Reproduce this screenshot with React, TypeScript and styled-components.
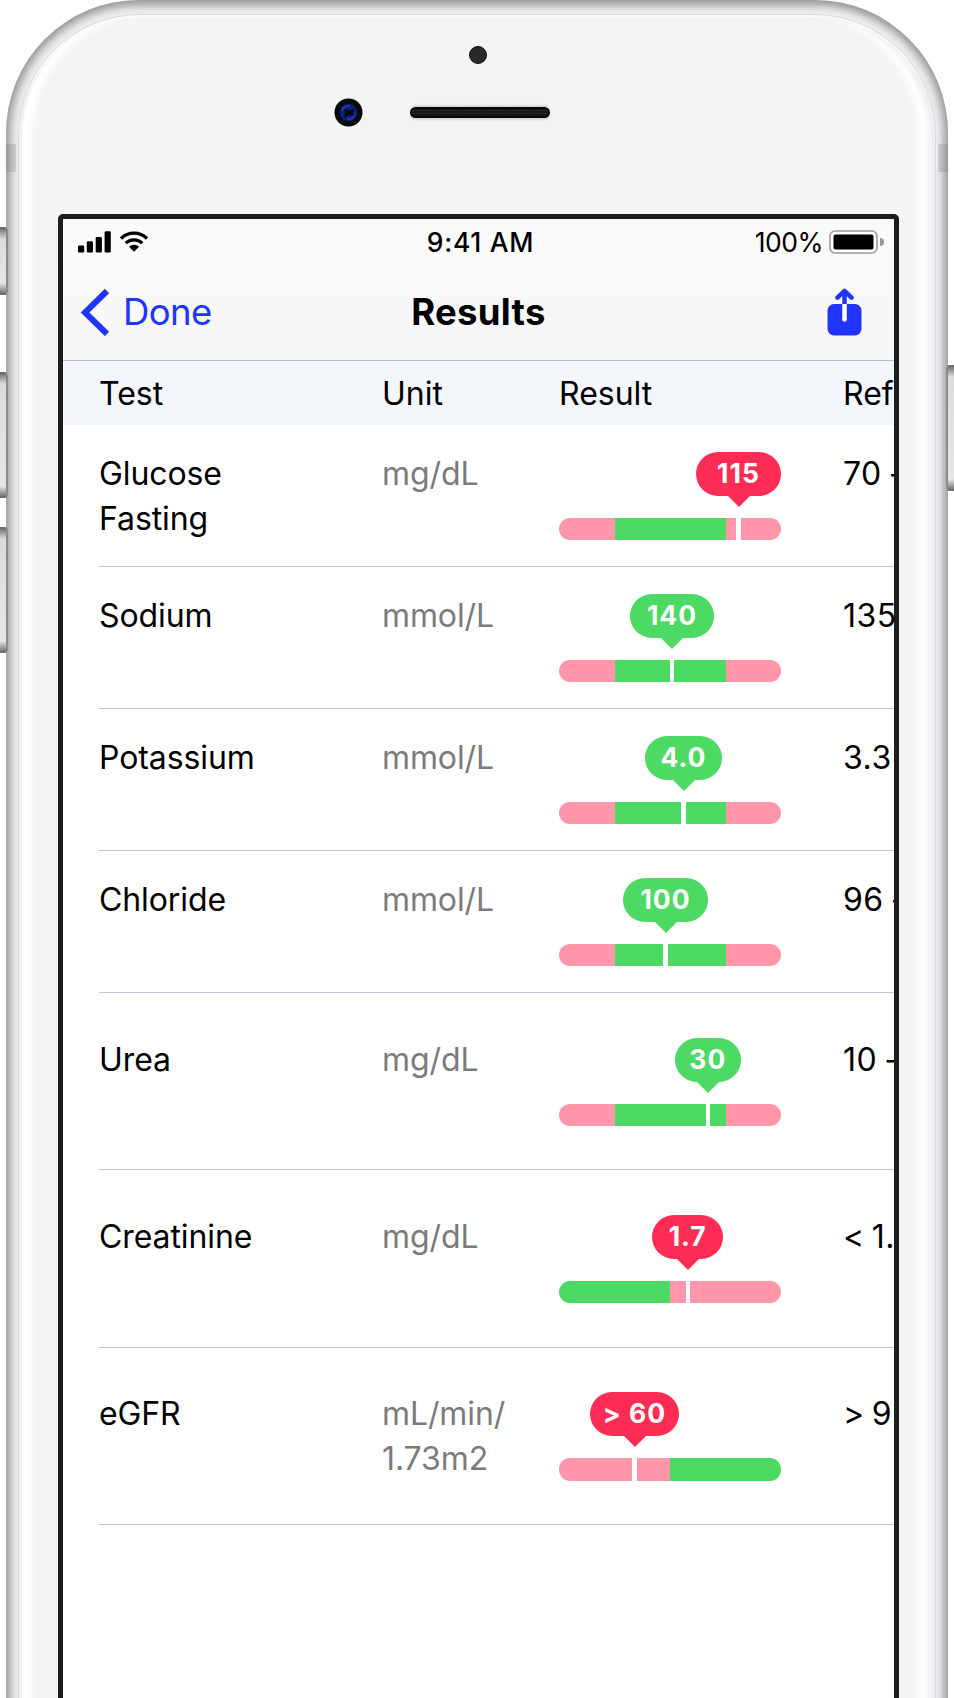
import React from "react";
import styled, { createGlobalStyle } from "styled-components";

const GlobalStyle = createGlobalStyle`
  *, *::before, *::after { box-sizing: border-box; }
  html, body { margin: 0; padding: 0; background: #fff; }
  body { font-family: Inter, "Liberation Sans", sans-serif; color: #000; }
`;

const Stage = styled.main`
  position: relative;
  width: 954px;
  height: 1698px;
  padding: 0 6px;
  overflow: hidden;
  background: #fff;
`;

const SideButton = styled.span<{ $side: "left" | "right"; $top: number; $height: number }>`
  position: absolute;
  z-index: 1;
  top: ${(p) => p.$top}px;
  ${(p) => p.$side}: -6px;
  width: 14px;
  height: ${(p) => p.$height}px;
  border: 2px solid #8b8b8b;
  border-top-color: #6d6d6d;
  border-bottom-color: #6d6d6d;
  border-radius: 4px;
  background: linear-gradient(#777, #dcdcdc 10px, #e6e6e6 calc(100% - 10px), #777);
`;

const Body = styled.div`
  position: relative;
  height: 1720px;
  padding: 14px 12px 0;
  border-radius: 133px 133px 0 0;
  background: #f0f0f1;
  box-shadow: inset 0 1px 10px 4px #8f9193;
`;

const Antenna = styled.span<{ $side: "left" | "right" }>`
  position: absolute;
  top: 144px;
  ${(p) => p.$side}: 0;
  width: 10px;
  height: 28px;
  background: rgba(110, 110, 112, 0.22);
`;

const Face = styled.div`
  height: 100%;
  padding: 199px 36px 0 39px;
  border: 1px solid #d9dadd;
  border-radius: 122px 122px 0 0;
  background: #f3f4f6;
  box-shadow: inset 0 2px 1px #fbfbfc, inset 3px 0 2px #eeeff1, inset -6px 0 4px #eeeff2,
    inset 16px 0 7px -3px #fff, inset -20px 0 5px -3px #fdfdfd;
`;

const Hardware = styled.div`
  position: absolute;
  inset: 0 0 auto 0;
  height: 140px;
`;

const Sensor = styled.span`
  position: absolute;
  left: 463px;
  top: 46px;
  width: 18px;
  height: 18px;
  border: 1.5px solid #111;
  border-radius: 50%;
  background: #292929;
`;

const Lens = styled.svg`
  position: absolute;
  left: 328px;
  top: 98px;
`;

const Speaker = styled.span`
  position: absolute;
  left: 404px;
  top: 107px;
  width: 140px;
  height: 11px;
  border: 2px solid #070707;
  border-radius: 6px;
  background: radial-gradient(circle, #3b3b3b 0.7px, #161616 1px) 0 0 / 3px 3px;
  box-shadow: 0 -2px 2px #d9dadb, 0 2px 2px #d5d6d8;
`;

const Screen = styled.section`
  height: 1510px;
  border: 5px solid #1d1d1d;
  border-radius: 5px;
  background: #fff;
  overflow: hidden;
`;

const TopBar = styled.header`
  height: 142px;
  border-bottom: 1px solid #b7bccb;
  background: linear-gradient(#fafafa, #f7f7f7);
`;

const StatusBar = styled.div`
  display: grid;
  grid-template-columns: 1fr auto 1fr;
  align-items: center;
  height: 46px;
  padding: 0 9px 0 15px;
  font-size: 26.5px;
  line-height: 46px;
`;

const Signals = styled.div`
  display: flex;
  align-items: center;
  gap: 8px;
`;

const Clock = styled.time`
  margin-left: -2px;
  font-weight: 500;
  letter-spacing: 0.7px;
`;

const Battery = styled.div`
  display: flex;
  align-items: center;
  justify-content: flex-end;
  gap: 6px;
  letter-spacing: -0.5px;
`;

const NavBar = styled.nav`
  display: grid;
  grid-template-columns: 1fr auto 1fr;
  align-items: center;
  height: 94px;
  padding: 0 17px;
`;

const Back = styled.button`
  display: flex;
  align-items: center;
  gap: 13px;
  padding: 0;
  border: 0;
  background: none;
  color: #2134ff;
  font: 400 36.5px/44px Inter, sans-serif;
  letter-spacing: -0.6px;
`;

const Title = styled.h1`
  margin: 0;
  font-size: 36.5px;
  font-weight: 650;
  line-height: 44px;
  letter-spacing: 0.3px;
`;

const Share = styled.button`
  justify-self: end;
  display: flex;
  margin-right: 15px;
  padding: 0;
  border: 0;
  background: none;
`;

const columns = "283px 177px 284px 200px";

const HeaderRow = styled.div`
  display: grid;
  grid-template-columns: ${columns};
  height: 64px;
  padding-left: 36px;
  background: #f3f6fb;
  font-size: 32px;
  line-height: 66px;
  letter-spacing: 0;
  white-space: nowrap;
`;

const Row = styled.div<{ $tall?: boolean }>`
  display: grid;
  grid-template-columns: ${columns};
  height: ${(p) => (p.$tall ? 177.3 : 142)}px;
  margin-left: 36px;
  padding-top: ${(p) => (p.$tall ? 44.5 : 27)}px;
  border-bottom: 1px solid #c3c4da;
  font-size: 32px;
  line-height: 44.8px;
  letter-spacing: -0.1px;
`;

const Name = styled.div`
  width: 180px;
`;

const Unit = styled.div`
  white-space: pre-line;
  color: #7b7b7b;
`;

const Reference = styled.div`
  letter-spacing: 0.5px;
  word-spacing: -2.5px;
  white-space: nowrap;
`;

const Gauge = styled.div`
  width: 222px;
`;

const Bubble = styled.div<{ $at: number; $width: number; $color: string }>`
  position: relative;
  width: ${(p) => p.$width}px;
  height: 44px;
  margin-left: ${(p) => p.$at - p.$width / 2}px;
  border-radius: 22px;
  background: ${(p) => p.$color};
  color: #fff;
  font-size: 26.5px;
  font-weight: 650;
  line-height: 43px;
  letter-spacing: 1px;
  text-align: center;
  white-space: nowrap;

  &::after {
    content: "";
    position: absolute;
    left: calc(50% - 11px);
    top: 44px;
    border: 11px solid transparent;
    border-top-color: ${(p) => p.$color};
    border-bottom: 0;
  }
`;

const Track = styled.div<{ $bands: string }>`
  position: relative;
  display: grid;
  grid-template-columns: ${(p) => p.$bands};
  height: 22.3px;
  margin-top: 22.2px;
  border-radius: 11.2px;
  overflow: hidden;
`;

const Band = styled.span<{ $good: boolean }>`
  background: ${(p) => (p.$good ? "#4cd964" : "#ff96aa")};
`;

const Marker = styled.span<{ $at: number }>`
  position: absolute;
  left: ${(p) => p.$at - 2.2}px;
  top: 0;
  width: 4.4px;
  height: 100%;
  background: #fff;
`;

type Result = {
  name: string;
  unit: string;
  value: string;
  at: number;
  width: number;
  alert?: boolean;
  bands: "middle" | "low" | "high";
  reference: string;
  tall?: boolean;
};

const results: Result[] = [
  { name: "Glucose Fasting", unit: "mg/dL", value: "115", at: 179.5, width: 84.5, alert: true, bands: "middle", reference: "70 -" },
  { name: "Sodium", unit: "mmol/L", value: "140", at: 113, width: 84.5, bands: "middle", reference: "135" },
  { name: "Potassium", unit: "mmol/L", value: "4.0", at: 124.5, width: 77.5, bands: "middle", reference: "3.3" },
  { name: "Chloride", unit: "mmol/L", value: "100", at: 106.5, width: 84.5, bands: "middle", reference: "96 -" },
  { name: "Urea", unit: "mg/dL", value: "30", at: 148.8, width: 66.5, bands: "middle", reference: "10 -", tall: true },
  { name: "Creatinine", unit: "mg/dL", value: "1.7", at: 128.7, width: 71, alert: true, bands: "low", reference: "< 1.", tall: true },
  { name: "eGFR", unit: "mL/min/\n1.73m2", value: "> 60", at: 75.5, width: 89, alert: true, bands: "high", reference: "> 9", tall: true },
];

const bandSets = {
  middle: { template: "1fr 2fr 1fr", good: [false, true, false] },
  low: { template: "1fr 1fr", good: [true, false] },
  high: { template: "1fr 1fr", good: [false, true] },
};

function ResultGauge({ result }: { result: Result }) {
  const set = bandSets[result.bands];
  return (
    <Gauge>
      <Bubble $at={result.at} $width={result.width} $color={result.alert ? "#ff2d55" : "#4cd964"}>
        {result.value}
      </Bubble>
      <Track $bands={set.template}>
        {set.good.map((good, i) => (
          <Band key={i} $good={good} />
        ))}
        <Marker $at={result.at} />
      </Track>
    </Gauge>
  );
}

export default function App() {
  return (
    <>
      <GlobalStyle />
      <Stage>
        <SideButton $side="left" $top={227} $height={68} />
        <SideButton $side="left" $top={372} $height={126} />
        <SideButton $side="left" $top={527} $height={126} />
        <SideButton $side="right" $top={365} $height={126} />
        <Body>
          <Antenna $side="left" />
          <Antenna $side="right" />
          <Hardware>
            <Sensor />
            <Lens width="29" height="29" viewBox="0 0 29 29">
              <circle cx="14.5" cy="14.5" r="14" fill="#0a0a0b" />
              <circle cx="14.5" cy="14.5" r="8.7" fill="#0b1f78" />
              <path d="M8 13a7 7 0 0 1 8-5M21 16a7 7 0 0 1-8 5" fill="none" stroke="#1539c0" strokeWidth="2" />
              <path d="M10 11l5 1 5-1-1 4 1 3-5-1-5 3 1-5z" fill="#05070f" />
            </Lens>
            <Speaker />
          </Hardware>
          <Face>
            <Screen>
              <TopBar>
                <StatusBar>
                  <Signals>
                    <svg width="33" height="22" viewBox="0 0 33 22">
                      <rect x="0" y="14.5" width="6.2" height="7" rx="1.3" />
                      <rect x="8.8" y="10.3" width="6.2" height="11.2" rx="1.3" />
                      <rect x="17.7" y="6" width="6.2" height="15.5" rx="1.3" />
                      <rect x="26.6" y="0.3" width="6.2" height="21.2" rx="1.3" />
                    </svg>
                    <svg width="30" height="22" viewBox="0 0 30 22">
                      <path d="M2 7.5a18.5 18.5 0 0 1 26 0M6.7 12.2a11.8 11.8 0 0 1 16.6 0" fill="none" stroke="#000" strokeWidth="3.2" />
                      <path d="M10 15.8a7.2 7.2 0 0 1 10 0L15 20.8z" />
                    </svg>
                  </Signals>
                  <Clock>9:41 AM</Clock>
                  <Battery>
                    <span>100%</span>
                    <svg width="56" height="24" viewBox="0 0 56 24">
                      <rect x="1" y="1" width="47" height="22" rx="5" fill="#fff" stroke="#9b9b9b" strokeWidth="1.6" />
                      <rect x="4.5" y="4.5" width="40" height="15" rx="2" />
                      <path d="M51 8a4 4 0 0 1 0 8z" fill="#9b9b9b" />
                    </svg>
                  </Battery>
                </StatusBar>
                <NavBar>
                  <Back>
                    <svg width="30" height="48" viewBox="0 0 30 48">
                      <path d="M27 3L5 24.500l22 21.500" fill="none" stroke="#2134ff" strokeWidth="6" />
                    </svg>
                    Done
                  </Back>
                  <Title>Results</Title>
                  <Share aria-label="Share">
                    <svg width="35" height="48" viewBox="0 0 35 48">
                      <rect x="0.5" y="16" width="34" height="31.5" rx="6.5" fill="#2134ff" />
                      <path d="M17.5 16V3.5M10.5 9.7L17.5 2.9L24.5 9.7" fill="none" stroke="#2134ff" strokeWidth="4.5" strokeLinecap="round" strokeLinejoin="round" />
                      <path d="M17.5 16V31.5" fill="none" stroke="#fff" strokeWidth="4.5" />
                      <circle cx="17.5" cy="31.5" r="2.25" fill="#fff" />
                    </svg>
                  </Share>
                </NavBar>
              </TopBar>
              <HeaderRow>
                <span>Test</span>
                <span>Unit</span>
                <span>Result</span>
                <span>Ref</span>
              </HeaderRow>
              {results.map((result) => (
                <Row key={result.name} $tall={result.tall}>
                  <Name>{result.name}</Name>
                  <Unit>{result.unit}</Unit>
                  <ResultGauge result={result} />
                  <Reference>{result.reference}</Reference>
                </Row>
              ))}
            </Screen>
          </Face>
        </Body>
      </Stage>
    </>
  );
}
